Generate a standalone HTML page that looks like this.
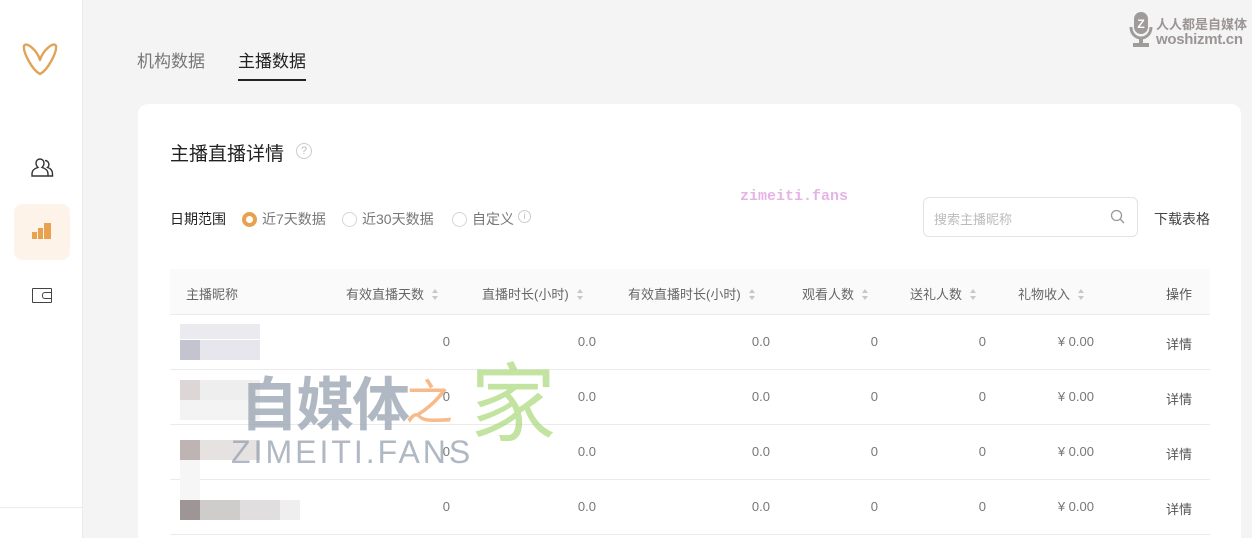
<!DOCTYPE html>
<html><head><meta charset="utf-8"><style>
*{margin:0;padding:0;box-sizing:border-box}
html{width:1252px;height:538px;overflow:hidden}
body{width:1252px;height:538px;overflow:hidden;background:#f4f4f4;font-family:"Liberation Sans","Noto Sans CJK SC",sans-serif;position:relative;color:#333}
.a{position:absolute;white-space:nowrap}
.side{position:absolute;left:0;top:0;width:83px;height:538px;background:#fff;border-right:1px solid #ececec}
.card{position:absolute;left:138px;top:104px;width:1103px;height:434px;background:#fff;border-radius:10px 10px 0 0}
.th{font-size:13px;color:#666;top:284px}
.td{font-size:13px;color:#777}
.sort{display:inline-block;width:7px;height:11px;vertical-align:-1px;margin-left:8px;position:relative}
.sort:before{content:"";position:absolute;left:0;top:0;border-left:3.5px solid transparent;border-right:3.5px solid transparent;border-bottom:4px solid #c8c8c8}
.sort:after{content:"";position:absolute;left:0;bottom:0;border-left:3.5px solid transparent;border-right:3.5px solid transparent;border-top:4px solid #c8c8c8}
.line{position:absolute;left:170px;width:1040px;height:1px;background:#ebebeb}
.radio{display:inline-block;width:15px;height:15px;border:1px solid #d6d6d6;border-radius:50%;vertical-align:-3px;margin-right:5px}
.px{position:absolute;height:20px}
</style></head><body>
<div class="side">
<svg class="a" style="left:20px;top:40px" width="40" height="38" viewBox="0 0 40 38"><path d="M20 34 C12 30 3 12 4 6 C6 1 17 10 20 20 C23 10 34 1 36 6 C37 12 28 30 20 34 Z" fill="none" stroke="#e0a458" stroke-width="2.4" stroke-linejoin="round"/></svg>
<svg class="a" style="left:30px;top:157px" width="24" height="22" viewBox="0 0 24 22"><path d="M10 2a4 4 0 0 1 4 4c0 2-1 3.5-2 4.5 3 .8 6 2.8 6 6.5v2H2v-2c0-3.7 3-5.7 6-6.5-1-1-2-2.5-2-4.5a4 4 0 0 1 4-4z" fill="none" stroke="#333" stroke-width="1.4"/><path d="M15 3.5a4 4 0 0 1 2.5 7c3 .8 5 2.8 5 6.5v2h-4" fill="none" stroke="#333" stroke-width="1.4"/></svg>
<div class="a" style="left:14px;top:204px;width:56px;height:56px;background:#fdf3e8;border-radius:8px"></div>
<div class="a" style="left:32px;top:232px;width:5px;height:7px;background:#e8a24f"></div>
<div class="a" style="left:38px;top:228px;width:5px;height:11px;background:#e8a24f"></div>
<div class="a" style="left:44px;top:223px;width:7px;height:16px;background:#e8a24f"></div>
<div class="a" style="left:32px;top:288px;width:20px;height:15px;border:1.4px solid #444;border-radius:1px"></div>
<div class="a" style="left:42px;top:292px;width:10px;height:7px;border:1.4px solid #444;border-right:none;border-radius:3px 0 0 3px"></div>
<div class="a" style="left:0;top:507px;width:83px;height:1px;background:#ececec"></div>
</div>
<div class="a" style="left:137px;top:47px;font-size:17px;color:#777">机构数据</div>
<div class="a" style="left:238px;top:47px;font-size:17px;color:#222">主播数据</div>
<div class="a" style="left:238px;top:79px;width:68px;height:2px;background:#222"></div>
<svg class="a" style="left:1129px;top:11px" width="26" height="38" viewBox="0 0 26 38"><rect x="5" y="1" width="14" height="22" rx="7" fill="#a09b9b"/><text x="12" y="17" font-size="12" fill="#fff" text-anchor="middle" font-family="Liberation Sans" font-weight="bold">Z</text><path d="M2 16c0 7 5 11 10 11s10-4 10-11" fill="none" stroke="#a09b9b" stroke-width="3"/><rect x="10" y="27" width="4" height="6" fill="#a09b9b"/><rect x="4" y="32" width="16" height="4" fill="#a09b9b"/></svg>
<div class="a" style="left:1156px;top:14px;font-size:13px;font-weight:bold;color:#9b9595">人人都是自媒体</div>
<div class="a" style="left:1156px;top:31px;font-size:15px;font-weight:bold;color:#9b9595;letter-spacing:-0.3px">woshizmt.cn</div>
<div class="card"></div>
<div class="a" style="left:170px;top:139px;font-size:19px;color:#222">主播直播详情</div>
<div class="a" style="left:296px;top:143px;width:16px;height:16px;border:1px solid #ccc;border-radius:50%;font-size:11px;color:#bbb;text-align:center;line-height:14px">?</div>
<div class="a" style="left:170px;top:209px;font-size:14px;color:#222">日期范围</div>
<div class="a" style="left:242px;top:209px;font-size:14px;color:#777"><span class="radio" style="border:4.5px solid #e8a24f"></span>近7天数据</div>
<div class="a" style="left:342px;top:209px;font-size:14px;color:#777"><span class="radio"></span>近30天数据</div>
<div class="a" style="left:452px;top:209px;font-size:14px;color:#777"><span class="radio"></span>自定义</div>
<div class="a" style="left:518px;top:210px;width:13px;height:13px;border:1px solid #ccc;border-radius:50%;font-size:9px;color:#bbb;text-align:center;line-height:11px">i</div>
<div class="a" style="left:740px;top:188px;font-size:15px;color:#e6b3e6;font-family:'Liberation Mono',monospace;font-weight:bold">zimeiti.fans</div>
<div class="a" style="left:923px;top:197px;width:215px;height:40px;border:1px solid #e3e3e3;border-radius:6px"></div>
<div class="a" style="left:934px;top:209px;font-size:13px;color:#bbb">搜索主播昵称</div>
<svg class="a" style="left:1110px;top:209px" width="16" height="16" viewBox="0 0 16 16"><circle cx="6.5" cy="6.5" r="5" fill="none" stroke="#999" stroke-width="1.3"/><path d="M10.3 10.3 14 14" stroke="#999" stroke-width="1.4"/></svg>
<div class="a" style="left:1154px;top:209px;font-size:14px;color:#444">下载表格</div>
<div class="a" style="left:170px;top:269px;width:1040px;height:45px;background:#fafafa"></div>
<div class="line" style="top:314px"></div>
<div class="line" style="top:369px"></div>
<div class="line" style="top:424px"></div>
<div class="line" style="top:479px"></div>
<div class="line" style="top:534px"></div>
<div class="a th" style="left:186px">主播昵称</div>
<div class="a th" style="left:346px">有效直播天数<span class="sort"></span></div>
<div class="a th" style="left:482px">直播时长(小时)<span class="sort"></span></div>
<div class="a th" style="left:628px">有效直播时长(小时)<span class="sort"></span></div>
<div class="a th" style="left:802px">观看人数<span class="sort"></span></div>
<div class="a th" style="left:910px">送礼人数<span class="sort"></span></div>
<div class="a th" style="left:1018px">礼物收入<span class="sort"></span></div>
<div class="a th" style="left:1166px;color:#555">操作</div>
<div class="a td" style="left:400px;top:334px;width:50px;text-align:right">0</div><div class="a td" style="left:540px;top:334px;width:56px;text-align:right">0.0</div><div class="a td" style="left:710px;top:334px;width:60px;text-align:right">0.0</div><div class="a td" style="left:830px;top:334px;width:48px;text-align:right">0</div><div class="a td" style="left:940px;top:334px;width:46px;text-align:right">0</div><div class="a td" style="left:1030px;top:334px;width:64px;text-align:right">¥ 0.00</div><div class="a td" style="left:1166px;top:334px;color:#555">详情</div>
<div class="a td" style="left:400px;top:389px;width:50px;text-align:right">0</div><div class="a td" style="left:540px;top:389px;width:56px;text-align:right">0.0</div><div class="a td" style="left:710px;top:389px;width:60px;text-align:right">0.0</div><div class="a td" style="left:830px;top:389px;width:48px;text-align:right">0</div><div class="a td" style="left:940px;top:389px;width:46px;text-align:right">0</div><div class="a td" style="left:1030px;top:389px;width:64px;text-align:right">¥ 0.00</div><div class="a td" style="left:1166px;top:389px;color:#555">详情</div>
<div class="a td" style="left:400px;top:444px;width:50px;text-align:right">0</div><div class="a td" style="left:540px;top:444px;width:56px;text-align:right">0.0</div><div class="a td" style="left:710px;top:444px;width:60px;text-align:right">0.0</div><div class="a td" style="left:830px;top:444px;width:48px;text-align:right">0</div><div class="a td" style="left:940px;top:444px;width:46px;text-align:right">0</div><div class="a td" style="left:1030px;top:444px;width:64px;text-align:right">¥ 0.00</div><div class="a td" style="left:1166px;top:444px;color:#555">详情</div>
<div class="a td" style="left:400px;top:499px;width:50px;text-align:right">0</div><div class="a td" style="left:540px;top:499px;width:56px;text-align:right">0.0</div><div class="a td" style="left:710px;top:499px;width:60px;text-align:right">0.0</div><div class="a td" style="left:830px;top:499px;width:48px;text-align:right">0</div><div class="a td" style="left:940px;top:499px;width:46px;text-align:right">0</div><div class="a td" style="left:1030px;top:499px;width:64px;text-align:right">¥ 0.00</div><div class="a td" style="left:1166px;top:499px;color:#555">详情</div>
<div class="px" style="left:180px;top:324px;width:80px;height:15px;background:#ebebef"></div>
<div class="px" style="left:180px;top:340px;width:80px;background:linear-gradient(90deg,#c4c4d0 0 20px,#e6e6ec 20px)"></div>
<div class="px" style="left:180px;top:380px;width:80px;background:linear-gradient(90deg,#dcd6d6 0 20px,#efeeee 20px)"></div>
<div class="px" style="left:180px;top:400px;width:80px;background:#f3f3f3"></div>
<div class="px" style="left:180px;top:440px;width:80px;background:linear-gradient(90deg,#bfb4b4 0 20px,#e6e2e2 20px)"></div>
<div class="px" style="left:180px;top:460px;width:20px;height:40px;background:#f6f6f6"></div>
<div class="px" style="left:180px;top:500px;width:120px;background:linear-gradient(90deg,#9e9696 0 20px,#cfcccc 20px 60px,#e0dede 60px 100px,#efefef 100px)"></div>
<div class="a" style="left:240px;top:377px;font-size:58px;font-weight:bold;color:rgba(150,160,175,0.75);letter-spacing:-2px;line-height:1">自媒体</div>
<div class="a" style="left:405px;top:380px;font-size:48px;color:rgba(245,170,110,0.8);line-height:1">之</div>
<div class="a" style="left:470px;top:362px;font-size:86px;color:rgba(170,215,120,0.7);line-height:1">家</div>
<div class="a" style="left:231px;top:436px;font-size:32px;color:rgba(150,160,175,0.75);letter-spacing:3px;line-height:1">ZIMEITI.FANS</div>
</body></html>
